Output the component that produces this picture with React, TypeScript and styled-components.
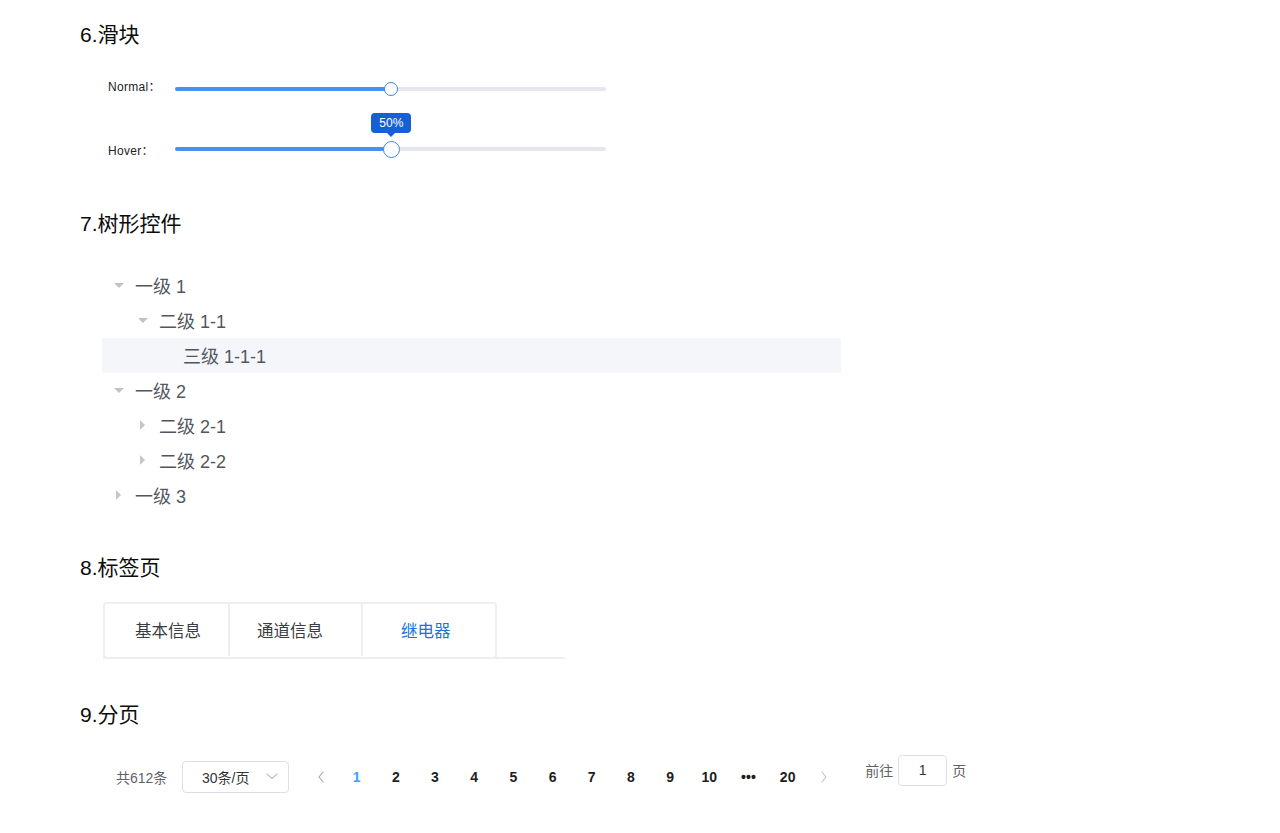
import React from "react";
import styled, { createGlobalStyle } from "styled-components";

const Global = createGlobalStyle`
  html, body { margin: 0; padding: 0; background: #fff; }
  body { font-family: "Liberation Sans", "Noto Sans CJK SC", sans-serif; color: #000; }
  * { box-sizing: border-box; }
`;

const Page = styled.div`
  padding-left: 80px;
  padding-bottom: 40px;
  width: 1280px;
`;

const Heading = styled.h2<{ $mt: number }>`
  margin: ${(p) => p.$mt}px 0 0 0;
  height: 28px;
  line-height: 28px;
  font-size: 21px;
  font-weight: 400;
  color: #0c0c0c;
`;

/* ---------- Slider ---------- */
const SliderBlock = styled.div`
  margin-top: 25px;
  padding-left: 28px;
  display: flex;
  flex-direction: column;
  gap: 30px;
`;

const SliderRow = styled.div`
  display: flex;
  align-items: center;
  height: 30px;
`;

const SliderLabel = styled.span<{ $lift: number }>`
  width: 67px;
  font-size: 12px;
  letter-spacing: 0.3px;
  color: #222;
  margin-top: ${(p) => -p.$lift}px;
`;

const Track = styled.div`
  position: relative;
  width: 431px;
  height: 4px;
  border-radius: 2px;
  background: #e4e7ed;
`;

const Fill = styled.div`
  height: 100%;
  border-radius: 2px;
  background: #4a90f2;
`;

const Thumb = styled.div<{ $size: number }>`
  position: absolute;
  top: 50%;
  width: ${(p) => p.$size}px;
  height: ${(p) => p.$size}px;
  margin-left: ${(p) => -p.$size / 2}px;
  margin-top: ${(p) => -p.$size / 2}px;
  border-radius: 50%;
  background: #fff;
  border: 1.5px solid #3f86ec;
`;

const Tip = styled.div`
  position: absolute;
  bottom: calc(100% + 9px);
  left: 50%;
  transform: translateX(-50%);
  width: 40px;
  height: 20px;
  border-radius: 4px;
  background: #1760d4;
  color: #fff;
  font-size: 12px;
  line-height: 20px;
  text-align: center;
  &::after {
    content: "";
    position: absolute;
    top: 100%;
    left: 50%;
    margin-left: -4px;
    border: 4px solid transparent;
    border-top-color: #1760d4;
    border-bottom: 0;
  }
`;

/* ---------- Tree ---------- */
const Tree = styled.div`
  margin-top: 29.5px;
  margin-left: 22px;
  width: 739px;
`;

const TreeRow = styled.div<{ $level: number; $active?: boolean }>`
  height: 35px;
  display: flex;
  align-items: center;
  padding-left: ${(p) => 12 + (p.$level - 1) * 24}px;
  background: ${(p) => (p.$active ? "#f5f6fa" : "transparent")};
  font-size: 18px;
  color: #52565d;
`;

const CaretBox = styled.span`
  width: 21px;
  height: 10px;
  display: flex;
  align-items: center;
  justify-content: flex-start;
`;

const Caret = styled.span<{ $open: boolean; $hidden?: boolean }>`
  width: 0;
  height: 0;
  visibility: ${(p) => (p.$hidden ? "hidden" : "visible")};
  ${(p) =>
    p.$open
      ? `border-left: 5px solid transparent; border-right: 5px solid transparent; border-top: 5px solid #bfc2c8;`
      : `margin-left: 2px; border-top: 5px solid transparent; border-bottom: 5px solid transparent; border-left: 5px solid #c4c6cb;`}
`;

/* ---------- Tabs ---------- */
const TabsHeader = styled.div`
  margin-top: 20px;
  margin-left: 23px;
  width: 462px;
  display: flex;
  border-bottom: 2px solid #eceef3;
`;

const TabNav = styled.div`
  display: flex;
  border: 2px solid #eceef3;
  border-radius: 4px;
  margin-bottom: -2px;
  overflow: hidden;
`;

const Tab = styled.div<{ $w: number; $pl: number; $active?: boolean }>`
  width: ${(p) => p.$w}px;
  height: 53px;
  display: flex;
  align-items: center;
  padding-left: ${(p) => p.$pl}px;
  font-size: 16.5px;
  color: ${(p) => (p.$active ? "#1a73d8" : "#3a3c40")};
  background: #fff;
  & + & {
    border-left: 2px solid #eceef3;
  }
  border-bottom: 2px solid ${(p) => (p.$active ? "#fff" : "transparent")};
`;

/* ---------- Pagination ---------- */
const Pager = styled.div`
  margin-top: 32px;
  margin-left: 36px;
  display: flex;
  align-items: center;
  height: 32px;
`;

const Total = styled.span`
  width: 66px;
  font-size: 14px;
  color: #606266;
`;

const Select = styled.div`
  width: 107px;
  height: 32px;
  border: 1px solid #dcdfe6;
  border-radius: 4px;
  display: flex;
  align-items: center;
  padding-left: 19px;
  padding-right: 10px;
  font-size: 14px;
  color: #333;
  justify-content: space-between;
  margin-right: 15px;
`;

const ArrowBtn = styled.span<{ $w: number }>`
  width: ${(p) => p.$w}px;
  display: flex;
  align-items: center;
  justify-content: center;
`;

const PageNum = styled.span<{ $active?: boolean }>`
  width: 39.2px;
  text-align: center;
  font-size: 14px;
  font-weight: 700;
  color: ${(p) => (p.$active ? "#409eff" : "#1d1e20")};
`;

const Goto = styled.div`
  margin-left: 24px;
  margin-bottom: 14px;
  display: flex;
  align-items: center;
  font-size: 14px;
  color: #606266;
  gap: 5px;
`;

const GotoInput = styled.div`
  width: 49px;
  height: 31px;
  border: 1px solid #dcdfe6;
  border-radius: 4px;
  display: flex;
  align-items: center;
  justify-content: center;
  color: #333;
`;

const Chevron = ({ dir, color }: { dir: "left" | "right" | "down"; color: string }) => {
  const d = dir === "left" ? "M7 1 L3 6 L7 11" : dir === "right" ? "M3 1 L7 6 L3 11" : "M1 3 L6 7.5 L11 3";
  return (
    <svg width={dir === "down" ? 12 : 10} height={12} viewBox={dir === "down" ? "0 0 12 12" : "0 0 10 12"} fill="none">
      <path d={d} stroke={color} strokeWidth={1.2} strokeLinecap="round" strokeLinejoin="round" />
    </svg>
  );
};

type Node = { label: string; level: number; open?: boolean; leaf?: boolean; active?: boolean };
const nodes: Node[] = [
  { label: "一级 1", level: 1, open: true },
  { label: "二级 1-1", level: 2, open: true },
  { label: "三级 1-1-1", level: 3, leaf: true, active: true },
  { label: "一级 2", level: 1, open: true },
  { label: "二级 2-1", level: 2, open: false },
  { label: "二级 2-2", level: 2, open: false },
  { label: "一级 3", level: 1, open: false },
];

const pages = ["1", "2", "3", "4", "5", "6", "7", "8", "9", "10", "•••", "20"];

export default function App() {
  return (
    <>
      <Global />
      <Page>
        <Heading $mt={21}>6.滑块</Heading>
        <SliderBlock>
          <SliderRow>
            <SliderLabel $lift={8}>Normal：</SliderLabel>
            <Track>
              <Fill style={{ width: "50%" }} />
              <Thumb $size={14} style={{ left: "50%" }} />
            </Track>
          </SliderRow>
          <SliderRow>
            <SliderLabel $lift={0}>Hover：</SliderLabel>
            <Track>
              <Fill style={{ width: "50%" }} />
              <Thumb $size={17} style={{ left: "50.2%" }}>
                <Tip>50%</Tip>
              </Thumb>
            </Track>
          </SliderRow>
        </SliderBlock>

        <Heading $mt={46}>7.树形控件</Heading>
        <Tree>
          {nodes.map((n) => (
            <TreeRow key={n.label} $level={n.level} $active={n.active}>
              <CaretBox>
                <Caret $open={!!n.open} $hidden={n.leaf} />
              </CaretBox>
              {n.label}
            </TreeRow>
          ))}
        </Tree>

        <Heading $mt={41.5}>8.标签页</Heading>
        <TabsHeader>
          <TabNav>
            <Tab $w={123} $pl={30}>
              基本信息
            </Tab>
            <Tab $w={133} $pl={27}>
              通道信息
            </Tab>
            <Tab $w={134} $pl={38} $active>
              继电器
            </Tab>
          </TabNav>
        </TabsHeader>

        <Heading $mt={42}>9.分页</Heading>
        <Pager>
          <Total>共612条</Total>
          <Select>
            <span>30条/页</span>
            <Chevron dir="down" color="#c0c4cc" />
          </Select>
          <ArrowBtn $w={33}>
            <Chevron dir="left" color="#a8abb2" />
          </ArrowBtn>
          {pages.map((p) => (
            <PageNum key={p} $active={p === "1"}>
              {p}
            </PageNum>
          ))}
          <ArrowBtn $w={34}>
            <Chevron dir="right" color="#c0c4cc" />
          </ArrowBtn>
          <Goto>
            <span>前往</span>
            <GotoInput>1</GotoInput>
            <span>页</span>
          </Goto>
        </Pager>
      </Page>
    </>
  );
}
